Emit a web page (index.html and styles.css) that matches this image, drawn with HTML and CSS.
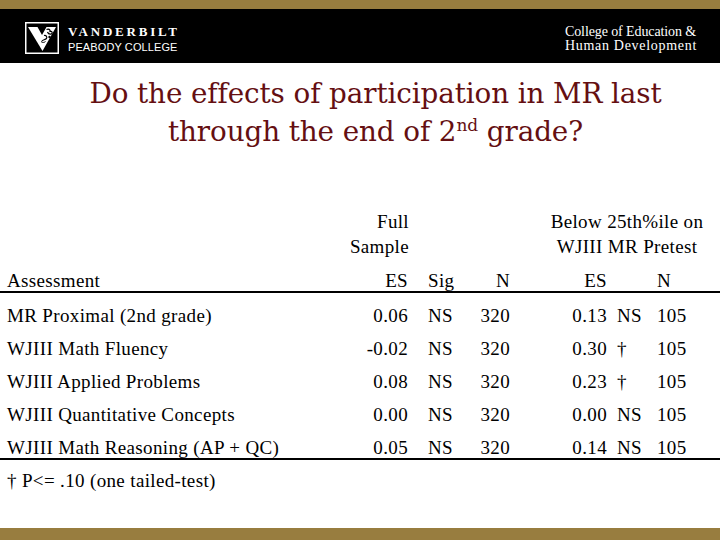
FILE: index.html
```html
<!DOCTYPE html>
<html lang="en">
<head>
<meta charset="utf-8">
<title>Do the effects of participation in MR last through the end of 2nd grade?</title>
<link rel="stylesheet" href="styles.css">
</head>
<body>
<div class="page">
  <header class="band">
    <div class="brand">
      <svg class="vlogo" viewBox="0 0 34 32" width="34" height="32" aria-hidden="true">
        <rect x="0.75" y="0.75" width="32.5" height="30.5" fill="none" stroke="#fff" stroke-width="1.5"/>
        <polygon points="3,5 31,5 17.5,29" fill="#fff"/>
        <polygon points="12.5,5 21.5,5 17,13" fill="#000"/>
        <path d="M21.5 7.5 C23.5 6.5 25.5 7.5 25 9.5 C27 9 28 10.5 26.5 12 C24.5 12.5 23 11.5 22.5 10" fill="none" stroke="#000" stroke-width="1.2"/>
        <path d="M19 13.5 C21 13 22.5 14.5 21.5 16.5 C20 18 18 17.5 17 19" fill="none" stroke="#000" stroke-width="1.2"/>
        <path d="M16 19.5 C17.5 21 19.5 20.5 20.5 19.5" fill="none" stroke="#000" stroke-width="1"/>
        <circle cx="24.5" cy="15" r="1.2" fill="#000"/>
      </svg>
      <div class="wordmark">
        <div class="vu">VANDERBILT</div>
        <div class="peabody">PEABODY COLLEGE</div>
      </div>
    </div>
    <div class="college">
      <div class="college-l1">College of Education &amp;</div>
      <div class="college-l2">Human Development</div>
    </div>
  </header>

  <h1 class="title">Do the effects of participation in MR last<br>through the end of 2<sup>nd</sup> grade?</h1>

  <section class="results">
    <div class="row group">
      <div class="c2 r">Full<br>Sample</div>
      <div class="below">Below 25th%ile on<br>WJIII MR Pretest</div>
    </div>
    <div class="row head">
      <div class="c1">Assessment</div>
      <div class="c2">ES</div>
      <div class="c3">Sig</div>
      <div class="c4">N</div>
      <div class="c5">ES</div>
      <div class="c6"></div>
      <div class="c7">N</div>
    </div>
    <div class="row data">
      <div class="c1">MR Proximal (2nd grade)</div>
      <div class="c2">0.06</div><div class="c3">NS</div><div class="c4">320</div>
      <div class="c5">0.13</div><div class="c6">NS</div><div class="c7">105</div>
    </div>
    <div class="row data">
      <div class="c1">WJIII Math Fluency</div>
      <div class="c2">-0.02</div><div class="c3">NS</div><div class="c4">320</div>
      <div class="c5">0.30</div><div class="c6">†</div><div class="c7">105</div>
    </div>
    <div class="row data">
      <div class="c1">WJIII Applied Problems</div>
      <div class="c2">0.08</div><div class="c3">NS</div><div class="c4">320</div>
      <div class="c5">0.23</div><div class="c6">†</div><div class="c7">105</div>
    </div>
    <div class="row data">
      <div class="c1">WJIII Quantitative Concepts</div>
      <div class="c2">0.00</div><div class="c3">NS</div><div class="c4">320</div>
      <div class="c5">0.00</div><div class="c6">NS</div><div class="c7">105</div>
    </div>
    <div class="row data last">
      <div class="c1">WJIII Math Reasoning (AP + QC)</div>
      <div class="c2">0.05</div><div class="c3">NS</div><div class="c4">320</div>
      <div class="c5">0.14</div><div class="c6">NS</div><div class="c7">105</div>
    </div>
  </section>

  <p class="note">† P&lt;= .10 (one tailed-test)</p>

  <footer class="bottom-bar"></footer>
</div>
</body>
</html>
```
FILE: styles.css
```css
html, body {
  margin: 0;
  padding: 0;
  background: #fff;
}
.page {
  width: 720px;
  height: 540px;
  display: flex;
  flex-direction: column;
  overflow: hidden;
  font-family: "Liberation Serif", "Times New Roman", serif;
  color: #000;
}
.band {
  height: 54px;
  border-top: 9px solid #987d3f;
  background: #000;
  display: flex;
  justify-content: space-between;
  align-items: flex-start;
  color: #fff;
}
.brand {
  display: flex;
  align-items: flex-start;
  padding: 13px 0 0 25px;
}
.vlogo {
  display: block;
}
.wordmark {
  margin-left: 9px;
  padding-top: 4px;
}
.vu {
  font-family: "Liberation Serif", serif;
  font-weight: bold;
  font-size: 13px;
  line-height: 12px;
  letter-spacing: 2.8px;
}
.peabody {
  font-family: "Liberation Sans", Arial, sans-serif;
  font-size: 11px;
  line-height: 12px;
  margin-top: 3px;
  letter-spacing: 0.1px;
}
.college {
  padding: 16px 23px 0 0;
  font-family: "Liberation Serif", serif;
  font-size: 14px;
  line-height: 14px;
}
.college-l1 {
  letter-spacing: -0.1px;
}
.college-l2 {
  letter-spacing: 0.7px;
}
.title {
  margin: 12px 0 0 0;
  padding-left: 31px;
  text-align: center;
  font-family: "DejaVu Serif", Georgia, serif;
  font-weight: normal;
  font-size: 27.8px;
  line-height: 38px;
  color: #650f12;
  letter-spacing: -0.1px;
}
.title sup {
  font-size: 17px;
  line-height: 0;
  vertical-align: 10px;
}
.results {
  margin-top: 59px;
  font-size: 19px;
  letter-spacing: 0.35px;
}
.row {
  display: grid;
  grid-template-columns: 340px 70px 50px 52px 97px 41px 70px;
  white-space: nowrap;
}
.group {
  line-height: 24.5px;
}
.group .c2 {
  grid-column: 2;
  text-align: right;
  padding-right: 1px;
}
.below {
  grid-column: 5 / 8;
  text-align: center;
  padding-left: 22px;
}
.head {
  padding-top: 12px;
  line-height: 20px;
  border-bottom: 2px solid #000;
}
.data {
  padding-top: 13px;
  line-height: 20px;
}
.last {
  border-bottom: 2px solid #000;
}
.c1 { padding-left: 7px; }
.c2 { text-align: right; padding-right: 2px; }
.c3 { padding-left: 18px; }
.c4 { text-align: right; padding-right: 2px; }
.c5 { text-align: right; padding-right: 2px; }
.c6 { padding-left: 8px; }
.c7 { padding-left: 7px; }
.note {
  margin: 11px 0 0 0;
  padding-left: 7px;
  font-size: 19px;
  line-height: 20px;
  letter-spacing: 0.35px;
}
.bottom-bar {
  margin-top: auto;
  height: 12px;
  background: #987d3f;
}
```
